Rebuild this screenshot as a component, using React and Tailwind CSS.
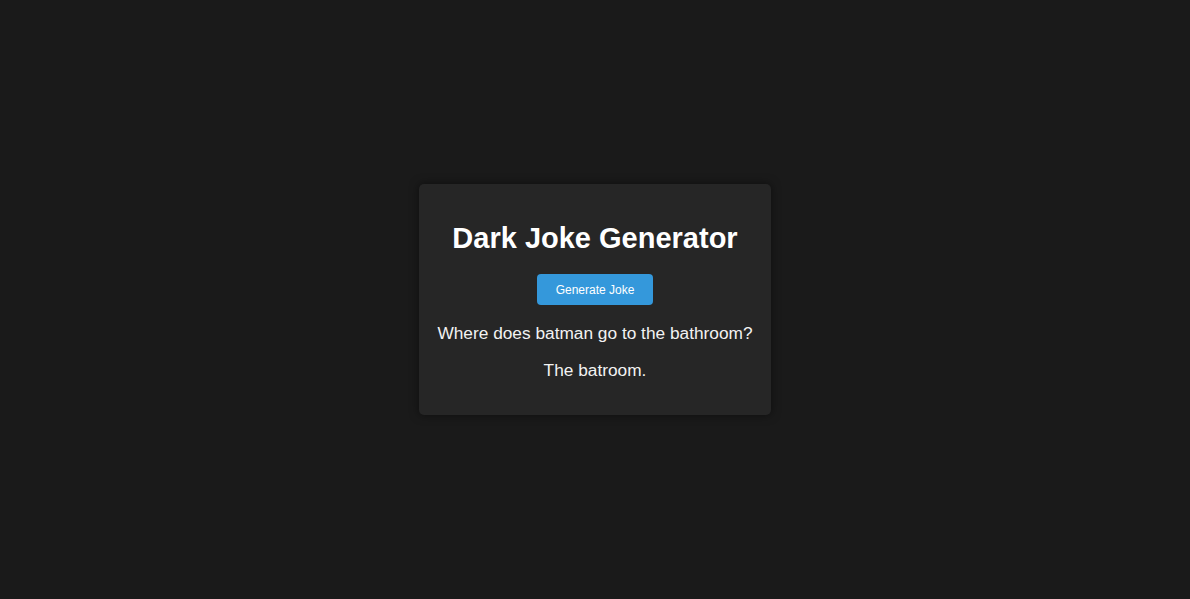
const App = () => {
  return (
    <div className="flex h-screen w-full items-center justify-center bg-[#1a1a1a] font-['Liberation_Sans',Arial,sans-serif] text-white">
      <div className="w-[352px] rounded-[5px] bg-[#262626] px-4 pt-[18px] pb-[18px] text-center shadow-[0_0_10px_rgba(0,0,0,0.5)]">
        <h1 className="mt-5 mb-[19px] text-[29px] font-bold leading-[33px] text-white">Dark Joke Generator</h1>
        <button className="h-[31px] w-[116px] rounded-[4px] bg-[#3498db] text-[12px] font-medium text-white">
          Generate Joke
        </button>
        <p className="mt-[18px] whitespace-nowrap text-[17.3px] leading-[20px] text-[#f2f2f2]">
          Where does batman go to the bathroom?
        </p>
        <p className="mt-[17px] mb-[17px] whitespace-nowrap text-[17.3px] leading-[20px] text-[#f2f2f2]">The batroom.</p>
      </div>
    </div>
  );
};

export default App;
